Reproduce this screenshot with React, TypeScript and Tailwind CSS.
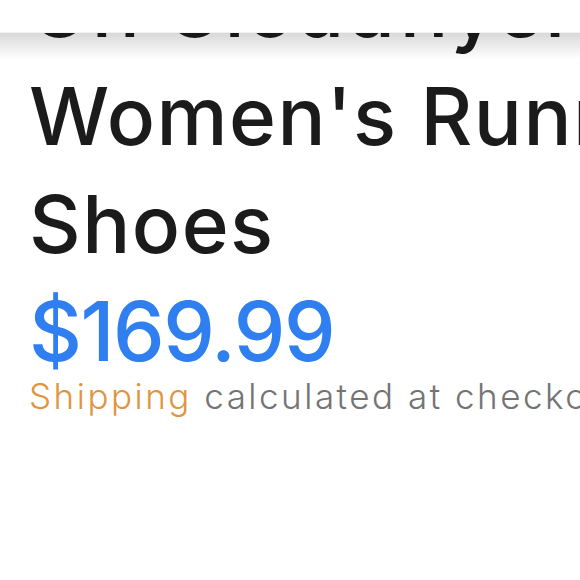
export default function App() {
  return (
    <div className="relative w-[580px] h-[580px] overflow-hidden bg-white" style={{ fontFamily: 'Inter, "Liberation Sans", sans-serif' }}>
      {/* product info, scrolled under the sticky header */}
      <div className="pl-[29px] w-[800px]">
        <h1 className="-mt-[46px] text-[80px] leading-[108px] font-medium tracking-[1.5px] text-[#1b1b1b]">
          On Cloudflyer 4 Women's Running Shoes
        </h1>
        <div className="text-[82px] leading-[107px] font-medium tracking-[-1.5px] text-[#2f7ff0]">$169.99</div>
        <p className="text-[35px] leading-[22px] font-light tracking-[2.5px] whitespace-nowrap">
          <span className="text-[#e0953f]">Shipping</span>{' '}
          <span className="text-[#747474]">calculated at checkout.</span>
        </p>
      </div>

      {/* sticky header */}
      <div className="absolute top-0 left-0 right-0 h-[33px] bg-white border-b border-black/5" />
      <div className="absolute top-[33px] left-0 right-0 h-[26px] bg-gradient-to-b from-black/15 to-transparent" />
    </div>
  );
}
